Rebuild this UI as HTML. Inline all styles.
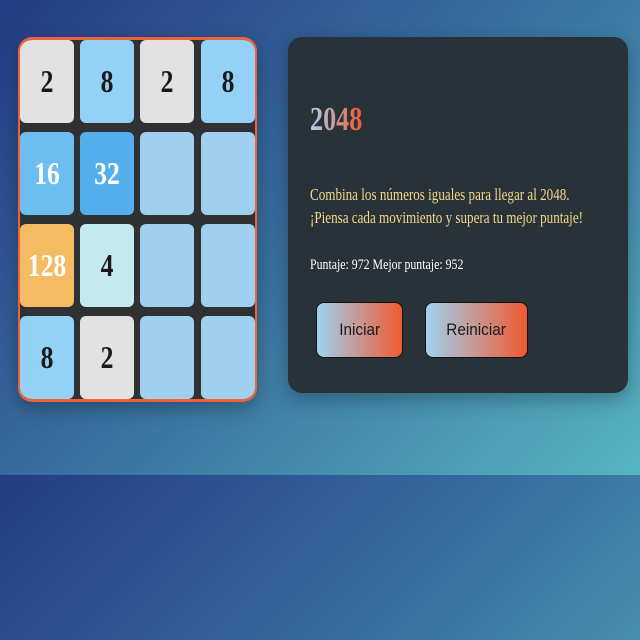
<!DOCTYPE html>
<html><head><style>
html,body{margin:0;padding:0;}
html{background:linear-gradient(135deg,#243c85 0%,#3a72a0 50%,#56b4c2 100%);background-size:640px 475px;background-repeat:repeat;height:640px;}
body{width:640px;height:640px;position:relative;overflow:hidden;}
.board{position:absolute;left:18px;top:37px;width:239px;height:365px;box-sizing:border-box;background:#2f3133;border:2px solid #f0603a;border-top-width:3px;border-bottom-width:3px;border-radius:14px;overflow:hidden;box-shadow:0 6px 18px rgba(0,0,0,.3);}
.t{position:absolute;width:54px;height:83px;border-radius:6px;display:flex;align-items:center;justify-content:center;font-family:"Liberation Serif",serif;font-weight:bold;font-size:32px;color:#1a1a1a;}
.t span{display:inline-block;transform:scaleX(0.8);}
.e{background:#9fd0ef;}
.g{background:#e2e2e2;}
.b{background:#93d2f6;}
.w{color:#fff;}
.panel{position:absolute;left:288px;top:37px;width:340px;height:356px;background:#283238;border-radius:14px;box-shadow:0 6px 20px rgba(0,0,0,.3);}
.sx{transform-origin:left top;white-space:nowrap;}
.title{position:absolute;left:22px;top:64px;font-family:"Liberation Serif",serif;font-weight:bold;font-size:34px;background:linear-gradient(90deg,#a8d4f0,#f05a30);-webkit-background-clip:text;background-clip:text;color:transparent;transform:scaleX(0.77);}
.desc{position:absolute;left:22px;top:146px;font-family:"Liberation Serif",serif;font-size:17px;line-height:23px;color:#f4d98a;transform:scaleX(0.77);}
.score{position:absolute;left:22px;top:220px;font-family:"Liberation Serif",serif;font-size:15px;color:#fff;transform:scaleX(0.79);}
.btn{position:absolute;top:265px;height:56px;border:1px solid #111;border-radius:8px;background:linear-gradient(90deg,#9fd2f0,#f05a30);font-family:"Liberation Sans",sans-serif;font-size:17px;color:#1a1a1a;display:flex;align-items:center;justify-content:center;box-sizing:border-box;}
.btn span{display:inline-block;transform:scaleX(0.9);}
</style></head><body>
<div class="board">
<div class="t g" style="left:0;top:0"><span>2</span></div>
<div class="t b" style="left:60px;top:0"><span>8</span></div>
<div class="t g" style="left:120px;top:0"><span>2</span></div>
<div class="t b" style="left:181px;top:0"><span>8</span></div>
<div class="t w" style="left:0;top:92px;background:#6cbdf0"><span>16</span></div>
<div class="t w" style="left:60px;top:92px;background:#55aeec"><span>32</span></div>
<div class="t e" style="left:120px;top:92px"></div>
<div class="t e" style="left:181px;top:92px"></div>
<div class="t w" style="left:0;top:184px;background:#f4bb62"><span>128</span></div>
<div class="t" style="left:60px;top:184px;background:#c4eaf0"><span>4</span></div>
<div class="t e" style="left:120px;top:184px"></div>
<div class="t e" style="left:181px;top:184px"></div>
<div class="t b" style="left:0;top:276px"><span>8</span></div>
<div class="t g" style="left:60px;top:276px"><span>2</span></div>
<div class="t e" style="left:120px;top:276px"></div>
<div class="t e" style="left:181px;top:276px"></div>
</div>
<div class="panel">
<div class="title sx">2048</div>
<div class="desc sx">Combina los números iguales para llegar al 2048.<br>¡Piensa cada movimiento y supera tu mejor puntaje!</div>
<div class="score sx">Puntaje: 972 Mejor puntaje: 952</div>
<div class="btn" style="left:28px;width:87px"><span>Iniciar</span></div>
<div class="btn" style="left:137px;width:103px"><span>Reiniciar</span></div>
</div>
</body></html>
